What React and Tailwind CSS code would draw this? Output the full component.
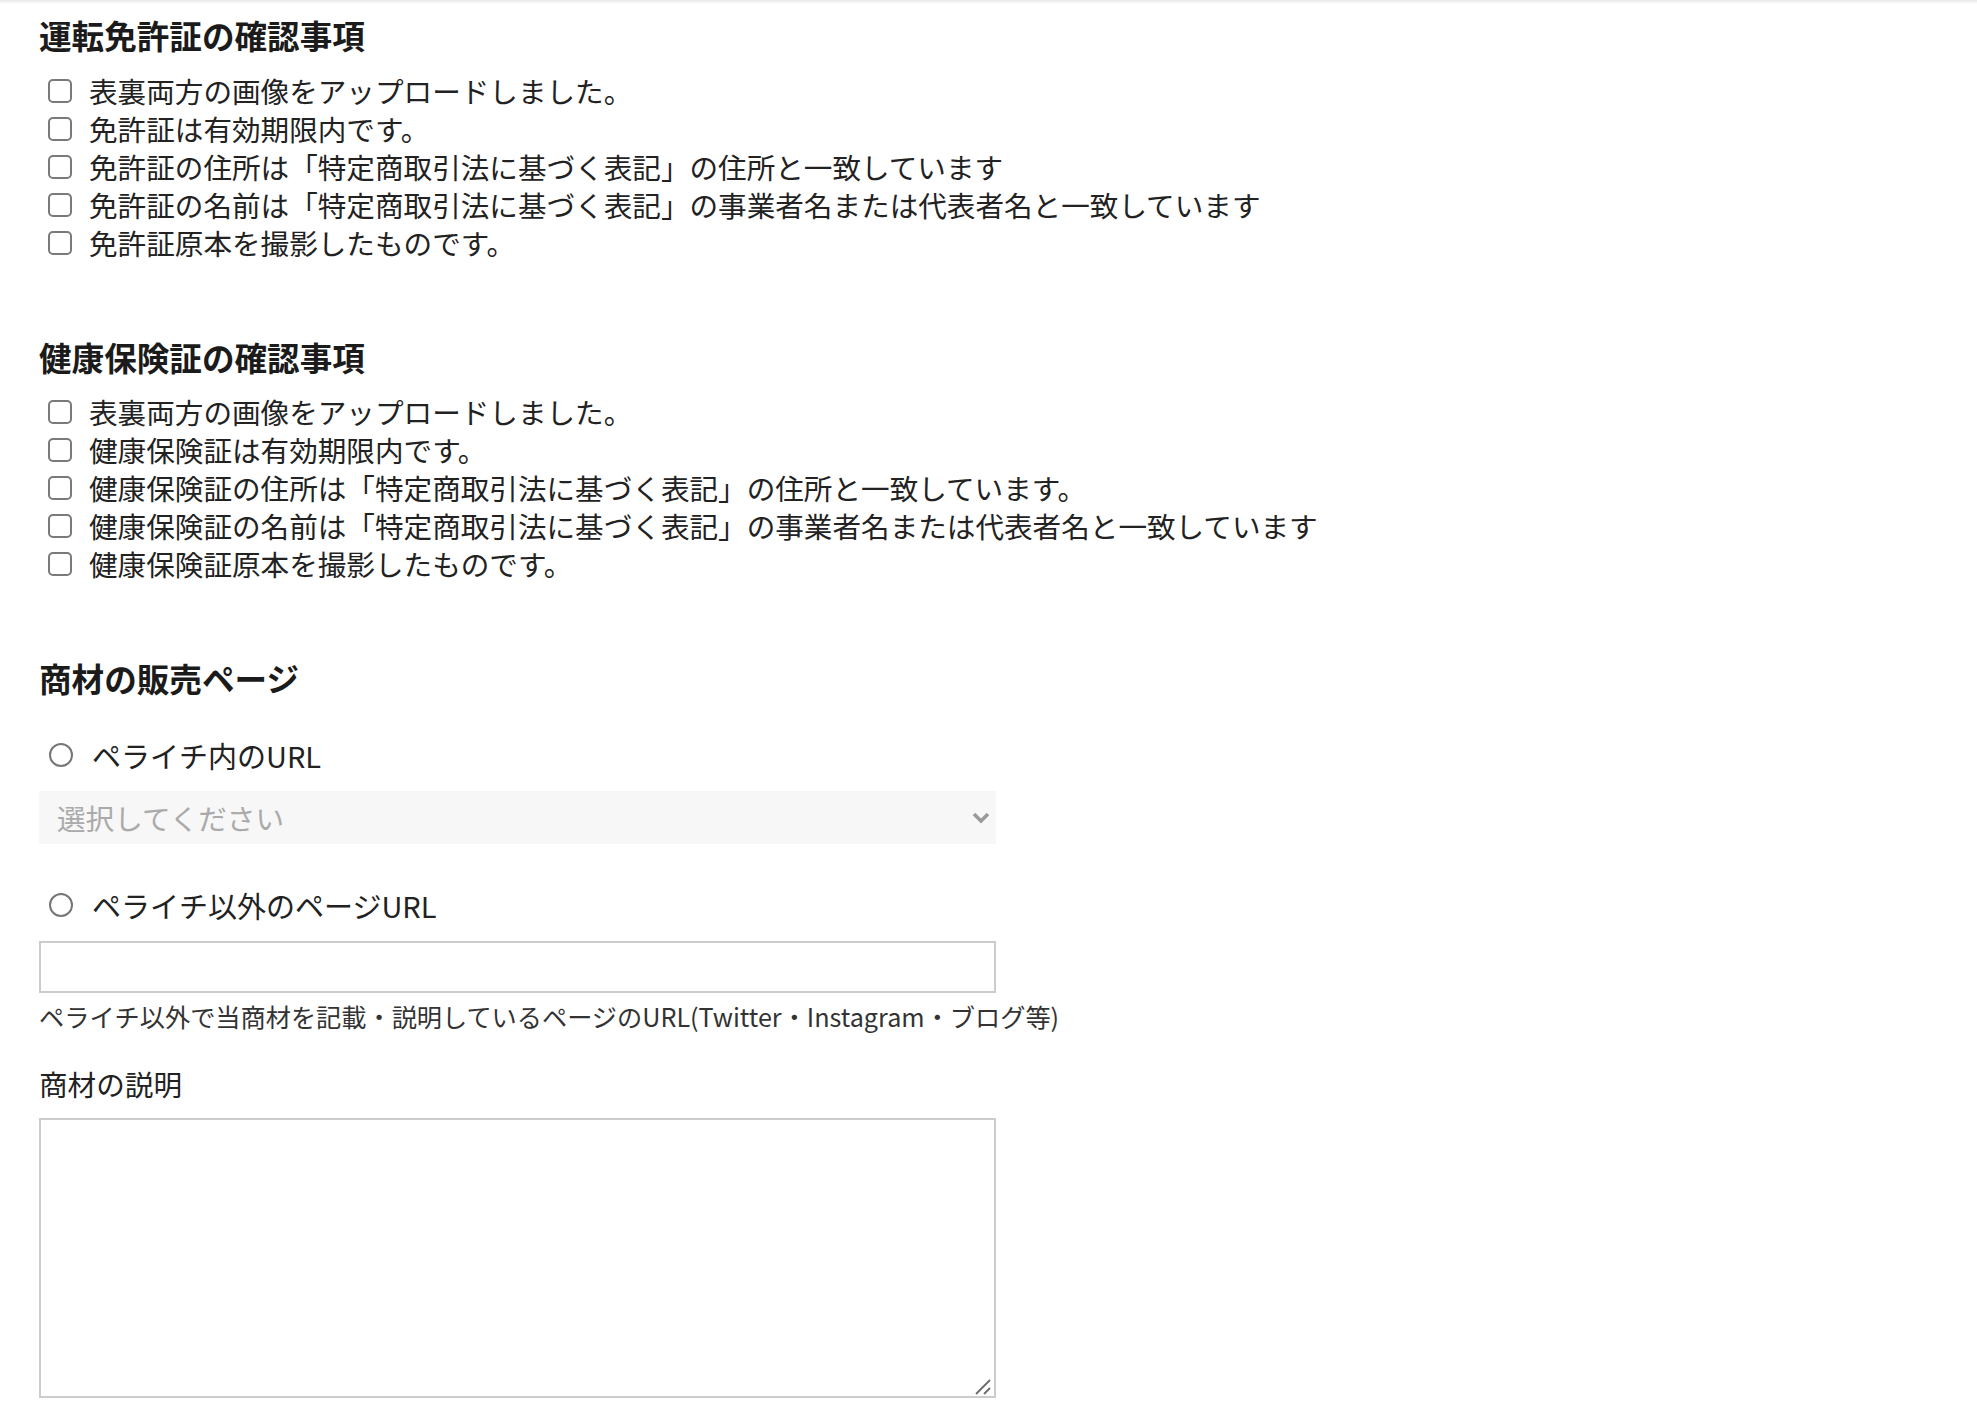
import React from "react";

const license = [
  "表裏両方の画像をアップロードしました。",
  "免許証は有効期限内です。",
  "免許証の住所は「特定商取引法に基づく表記」の住所と一致しています",
  "免許証の名前は「特定商取引法に基づく表記」の事業者名または代表者名と一致しています",
  "免許証原本を撮影したものです。",
];

const insurance = [
  "表裏両方の画像をアップロードしました。",
  "健康保険証は有効期限内です。",
  "健康保険証の住所は「特定商取引法に基づく表記」の住所と一致しています。",
  "健康保険証の名前は「特定商取引法に基づく表記」の事業者名または代表者名と一致しています",
  "健康保険証原本を撮影したものです。",
];

function CheckRow({ text }) {
  return (
    <div className="flex items-center h-[38px]">
      <span className="ml-[9px] w-[24px] h-[24px] shrink-0 border-2 border-[#7a7a7a] rounded-[5px] bg-white" />
      <span className="ml-[17px] text-[28.6px] leading-[38px] text-[#222] whitespace-nowrap">{text}</span>
    </div>
  );
}

function RadioRow({ text }) {
  return (
    <div className="flex items-center h-[40px]">
      <span className="ml-[10px] w-[24px] h-[24px] shrink-0 rounded-full border-2 border-[#767676] bg-white" />
      <span className="ml-[19px] text-[29px] leading-[40px] text-[#222] whitespace-nowrap">{text}</span>
    </div>
  );
}

export default function App() {
  return (
    <div className="min-h-[1415px] bg-white font-['Noto_Sans_CJK_JP','Noto_Sans',sans-serif]">
      <div className="h-[4px] bg-gradient-to-b from-[#e9e9e9] to-white" />
      <div className="pl-[39px] flex flex-col items-start">
        <h2 className="mt-[11px] text-[32.6px] leading-[40px] font-bold text-[#1b1b1b]">運転免許証の確認事項</h2>
        <div className="mt-[17px] flex flex-col">
          {license.map((t, i) => (
            <CheckRow key={i} text={t} />
          ))}
        </div>

        <h2 className="mt-[75px] text-[32.6px] leading-[40px] font-bold text-[#1b1b1b]">健康保険証の確認事項</h2>
        <div className="mt-[16px] flex flex-col">
          {insurance.map((t, i) => (
            <CheckRow key={i} text={t} />
          ))}
        </div>

        <h2 className="mt-[75px] text-[32.6px] leading-[40px] font-bold text-[#1b1b1b]">商材の販売ページ</h2>

        <div className="mt-[37px]">
          <RadioRow text="ペライチ内のURL" />
        </div>
        <div className="mt-[16px] w-[957px] h-[53px] bg-[#f7f7f7] flex items-center justify-between pl-[18px] pr-[6px]">
          <span className="text-[28.6px] leading-[40px] text-[#aaaaaa]">選択してください</span>
          <svg width="18" height="12" viewBox="0 0 18 12" className="block">
            <polyline points="2,2 9,9 16,2" fill="none" stroke="#9a9a9a" strokeWidth="3.6" />
          </svg>
        </div>

        <div className="mt-[41px]">
          <RadioRow text="ペライチ以外のページURL" />
        </div>
        <div className="mt-[16px] w-[957px] h-[52px] border-2 border-[#cccccc] bg-white" />
        <p className="mt-[7px] text-[25.2px] leading-[32px] text-[#333]">
          ペライチ以外で当商材を記載・説明しているページのURL(Twitter・Instagram・ブログ等)
        </p>

        <p className="mt-[32px] text-[28.6px] leading-[40px] text-[#222]">商材の説明</p>
        <div className="relative mt-[14px] w-[957px] h-[280px] border-2 border-[#cccccc] bg-white">
          <svg width="20" height="20" viewBox="0 0 20 20" className="absolute right-0 bottom-0">
            <line x1="2" y1="18" x2="16" y2="4" stroke="#6a6a6a" strokeWidth="1.8" />
            <line x1="10" y1="18" x2="16" y2="12" stroke="#6a6a6a" strokeWidth="1.8" />
          </svg>
        </div>
      </div>
    </div>
  );
}
